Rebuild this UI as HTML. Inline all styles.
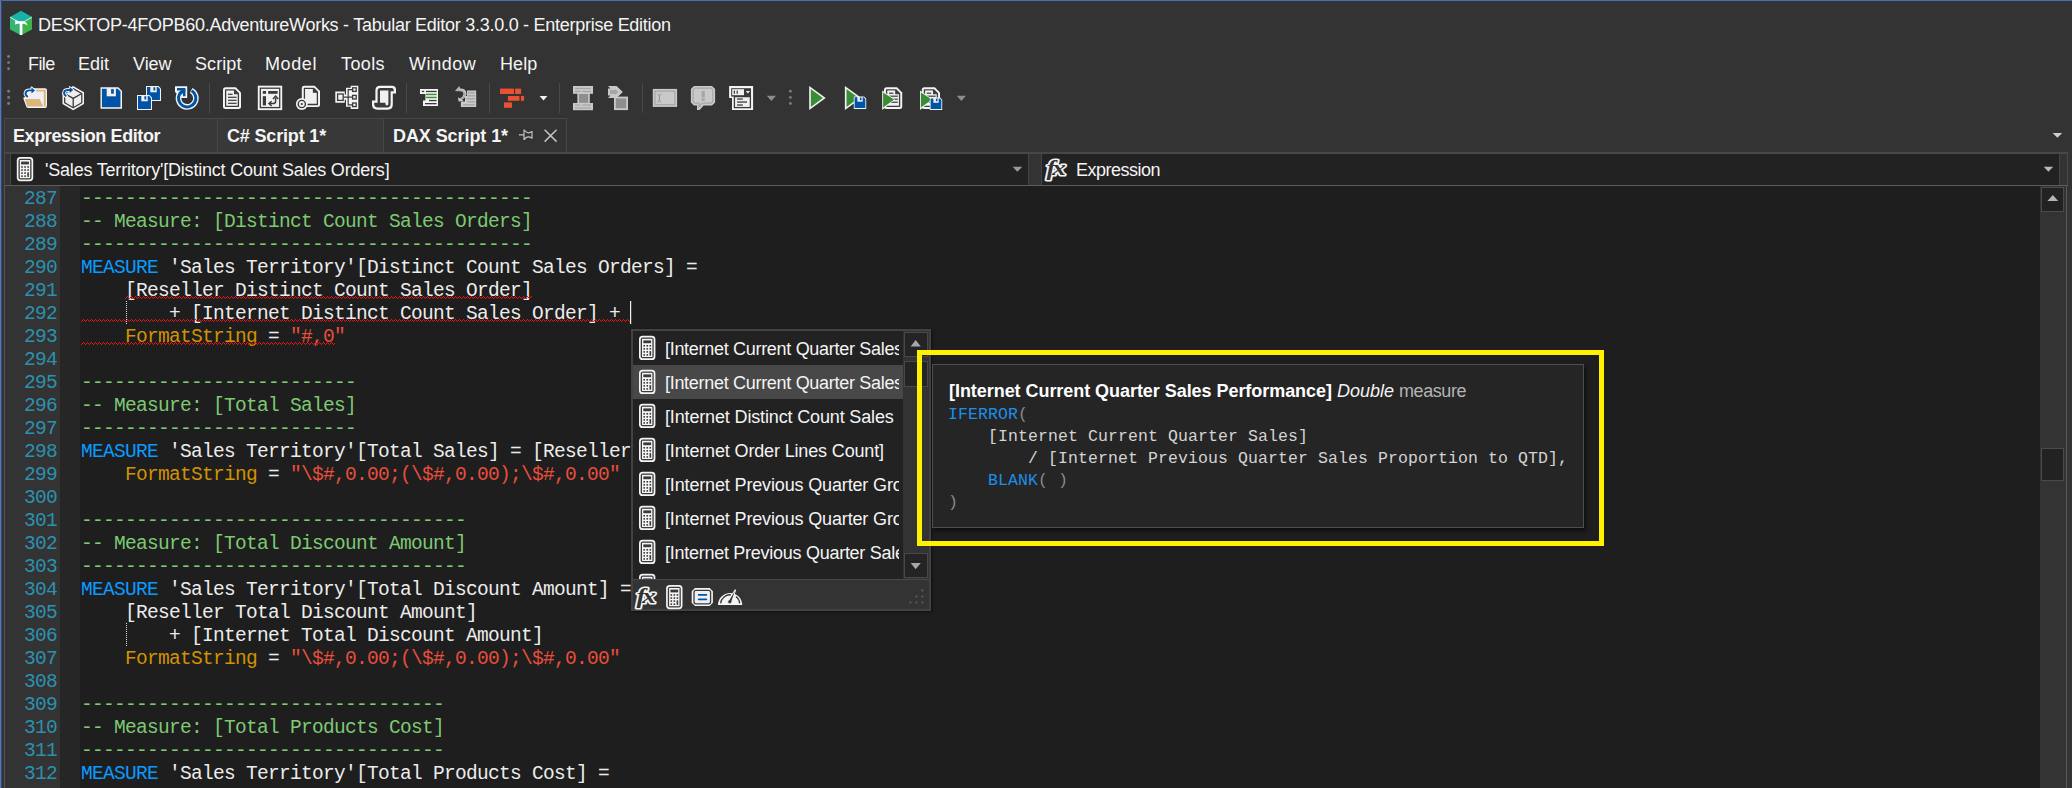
<!DOCTYPE html>
<html><head><meta charset="utf-8"><title>Tabular Editor 3</title>
<style>
html,body{margin:0;padding:0;}
body{width:2072px;height:788px;overflow:hidden;background:#333333;position:relative;font-family:"Liberation Sans",sans-serif;color:#f1f1f1;}
.abs{position:absolute;}
.ui{position:absolute;white-space:nowrap;font-size:18px;line-height:26px;color:#f4f4f4;}
.b{font-weight:700;}
.mono{font-family:"Liberation Mono",monospace;}
.ln{position:absolute;left:6px;width:51px;text-align:right;height:23px;line-height:23px;font-family:"Liberation Mono",monospace;font-size:19.5px;letter-spacing:-0.7px;color:#2b91af;padding-top:2px;box-sizing:border-box;}
.cl{position:absolute;left:81px;height:23px;line-height:23px;white-space:pre;font-family:"Liberation Mono",monospace;font-size:19.5px;letter-spacing:-0.7px;color:#dcdcdc;padding-top:2px;box-sizing:border-box;}
.c{color:#7dca72;} .k{color:#0a9bff;} .t{color:#ececec;} .p{color:#d39200;} .s{color:#e84e3c;}
.row{position:absolute;left:0;width:270px;height:34px;overflow:hidden;white-space:nowrap;}
.row.sel{background:#484848;}
.row .calc{position:absolute;left:5px;top:4px;}
.row .rt{position:absolute;left:32px;top:6px;width:234px;overflow:hidden;font-size:18px;line-height:24px;color:#f4f4f4;letter-spacing:-0.15px;}
.tt{font-family:"Liberation Mono",monospace;font-size:16.5px;letter-spacing:0.1px;line-height:22px;white-space:pre;color:#d4d4d4;position:absolute;left:948px;}
.f{color:#1c8fe8;} .g{color:#8a8a8a;}
</style></head><body>
<!-- window border -->
<div class="abs" style="left:0;top:0;width:2072px;height:1px;background:#4a6db5"></div>
<div class="abs" style="left:0;top:0;width:1px;height:788px;background:#5878bd"></div>
<div class="abs" style="left:1px;top:0;width:1px;height:788px;background:#3a4663"></div>

<!-- title -->
<div class="ui" id="title" style="left:38px;top:12px;letter-spacing:-0.27px">DESKTOP-4FOPB60.AdventureWorks - Tabular Editor 3.3.0.0 - Enterprise Edition</div>

<!-- menu -->
<div class="ui m" style="left:28px;top:51px;letter-spacing:-0.62px">File</div>
<div class="ui m" style="left:78px;top:51px;letter-spacing:0px">Edit</div>
<div class="ui m" style="left:133px;top:51px;letter-spacing:-0.05px">View</div>
<div class="ui m" style="left:195px;top:51px;letter-spacing:0.08px">Script</div>
<div class="ui m" style="left:265px;top:51px;letter-spacing:0.6px">Model</div>
<div class="ui m" style="left:341px;top:51px;letter-spacing:0.4px">Tools</div>
<div class="ui m" style="left:409px;top:51px;letter-spacing:0.57px">Window</div>
<div class="ui m" style="left:500px;top:51px;letter-spacing:0.12px">Help</div>

<svg class="abs" style="left:0;top:44px" width="1000" height="74" viewBox="0 44 1000 74">
<circle cx="8.6" cy="91.3" r="1.45" fill="#7a7a7a"/>
<circle cx="8.6" cy="97.39999999999999" r="1.45" fill="#7a7a7a"/>
<circle cx="8.6" cy="103.5" r="1.45" fill="#7a7a7a"/>
<circle cx="790.4" cy="91.3" r="1.45" fill="#7a7a7a"/>
<circle cx="790.4" cy="97.39999999999999" r="1.45" fill="#7a7a7a"/>
<circle cx="790.4" cy="103.5" r="1.45" fill="#7a7a7a"/>
<circle cx="8.6" cy="56.5" r="1.45" fill="#7a7a7a"/>
<circle cx="8.6" cy="62.6" r="1.45" fill="#7a7a7a"/>
<circle cx="8.6" cy="68.7" r="1.45" fill="#7a7a7a"/>
<rect x="209" y="83" width="1" height="30" fill="#494949"/>
<rect x="406" y="83" width="1" height="30" fill="#494949"/>
<rect x="489" y="83" width="1" height="30" fill="#494949"/>
<rect x="559" y="83" width="1" height="30" fill="#494949"/>
<rect x="642" y="83" width="1" height="30" fill="#494949"/>
<path d="M36 88.2 H45 Q47 88.2 47 90.2 V106 Q47 108 45 108 H28 Q26.6 108 26.2 106.6 L23.4 98.8 Q23 97.4 24.4 97.2 L25.5 97 V90 L34 88.2Z" fill="#f4f4f4"/>
<rect x="27" y="89.8" width="18.6" height="16.6" fill="#eeeef4"/>
<path d="M36 89.8 H45.8 V106.4 H43.8 V91.6 H36Z" fill="#dcb67a"/>
<path d="M24.8 99 H39.6 L43.2 106.4 H27.2Z" fill="#dcb67a"/>
<path d="M27.6 96.6 C24 94 25.4 90.4 29.4 90.4 H31.6" fill="none" stroke="#f4f4f4" stroke-width="3.8" stroke-linecap="round"/>
<path d="M31.4 87.2 L35.4 90.4 L31.4 93.6Z" fill="#f4f4f4" stroke="#f4f4f4" stroke-width="1.6" stroke-linejoin="round"/>
<path d="M27.8 96.9 C24 94.2 25.2 90.4 29.4 90.4 H32" fill="none" stroke="#0054a6" stroke-width="1.9"/>
<path d="M31.5 87.5 L35 90.4 L31.5 93.4Z" fill="#0054a6"/>
<path d="M73.2 86 L84 92.2 V104 L73.2 110.2 L62.5 104 V92.2Z" fill="#f4f4f4"/>
<path d="M73.2 88.6 L81.8 93.5 V102.8 L73.2 107.7 L64.7 102.8 V93.5Z" fill="#eeeef0" stroke="#3a3a3a" stroke-width="1.3" stroke-linejoin="round"/>
<path d="M64.7 93.5 L73.2 98.4 L81.8 93.5 M73.2 98.4 V107.7" fill="none" stroke="#3a3a3a" stroke-width="1.3"/>
<path d="M66 96 C62.6 93.4 64 90 68 90 H70" fill="none" stroke="#f4f4f4" stroke-width="3.8" stroke-linecap="round"/>
<path d="M69.6 86.8 L73.6 90 L69.6 93.2Z" fill="#f4f4f4" stroke="#f4f4f4" stroke-width="1.4" stroke-linejoin="round"/>
<path d="M66.2 96.3 C62.6 93.6 63.8 90 68 90 H70.4" fill="none" stroke="#0054a6" stroke-width="1.9"/>
<path d="M69.7 87.1 L73.2 90 L69.7 93Z" fill="#0054a6"/>
<path d="M100.5 87.3 H118.4 L122.0 90.89999999999999 V108.8 H100.5Z" fill="#f4f4f4"/><path d="M101.9 88.8 H117.8 L120.5 91.5 V107.2 H101.9Z" fill="#0054a6"/><rect x="106.7" y="88.1" width="9.2" height="8.2" fill="#f2f0f0"/><rect x="111.1" y="89.1" width="2.7" height="4.6" fill="#0054a6"/>
<path d="M146 86 H158.48837209302326 L161 88.51162790697674 V101 H146Z" fill="#f4f4f4"/><path d="M146.97674418604652 87.04651162790698 H158.06976744186048 L159.95348837209303 88.93023255813954 V99.88372093023256 H146.97674418604652Z" fill="#0054a6"/><rect x="150.32558139534885" y="86.55813953488372" width="6.4186046511627906" height="5.720930232558139" fill="#f2f0f0"/><rect x="153.3953488372093" y="87.25581395348837" width="1.8837209302325584" height="3.2093023255813953" fill="#0054a6"/>
<path d="M137 95 H149.48837209302326 L152 97.51162790697674 V110 H137Z" fill="#f4f4f4"/><path d="M137.97674418604652 96.04651162790698 H149.06976744186048 L150.95348837209303 97.93023255813954 V108.88372093023256 H137.97674418604652Z" fill="#0054a6"/><rect x="141.32558139534885" y="95.55813953488372" width="6.4186046511627906" height="5.720930232558139" fill="#f2f0f0"/><rect x="144.3953488372093" y="96.25581395348837" width="1.8837209302325584" height="3.2093023255813953" fill="#0054a6"/>
<path d="M191.15 90.45 A8.7 8.7 0 1 1 179.82 93.59" fill="none" stroke="#f4f4f4" stroke-width="5.6"/>
<path d="M175 86.2 H187.2 V98 H181.4 L175 91.9Z" fill="#f4f4f4"/>
<path d="M191.68 90.74 A8.7 8.7 0 1 1 179.67 93.85" fill="none" stroke="#0054a6" stroke-width="3.0"/>
<path d="M177 88 H185.5 V96.2 H183 V90.5 H177Z" fill="#0054a6"/>
<path d="M179.6 94 L184.4 89.2" stroke="#0054a6" stroke-width="3.4" fill="none"/>
<path d="M225.5 87.3 H235.8 L241 92.5 V106.4 Q241 108.9 238.5 108.9 H225.5 Q223 108.9 223 106.4 V89.8 Q223 87.3 225.5 87.3Z" fill="#f4f4f4"/><path d="M225.6 89.89999999999999 H234.9 L238.4 93.4 V106.30000000000001 H225.6Z" fill="#f0f0f2" stroke="#3a3a3a" stroke-width="1.3" stroke-linejoin="round"/><path d="M234.60000000000002 89.89999999999999 V93.7 H238.4" fill="#3a3a3a" stroke="#3a3a3a" stroke-width="1.1"/>
<rect x="228" y="93.7" width="4.599999999999994" height="1.2" fill="#3a3a3a"/>
<rect x="228" y="96.7" width="8.599999999999994" height="1.2" fill="#3a3a3a"/>
<rect x="228" y="99.7" width="8.599999999999994" height="1.2" fill="#3a3a3a"/>
<rect x="228" y="102.7" width="8.599999999999994" height="1.2" fill="#3a3a3a"/>
<rect x="257.8" y="85.7" width="24.4" height="24.4" fill="#f4f4f4"/>
<rect x="260.3" y="88.2" width="19.4" height="19.4" fill="#f0f0f2" stroke="#3a3a3a" stroke-width="1.3"/>
<rect x="262.8" y="91" width="3.2" height="2.8" fill="#3a3a3a"/>
<rect x="268.2" y="91" width="9.4" height="2.8" fill="#3a3a3a"/>
<rect x="262.8" y="96.2" width="3.2" height="9.2" fill="#3a3a3a"/>
<path d="M270 103.6 H273.2 Q275.6 103.6 275.6 101.2 V98" fill="none" stroke="#3a3a3a" stroke-width="1.5"/>
<path d="M273 99 L275.6 96.2 L278.2 99" fill="none" stroke="#3a3a3a" stroke-width="1.5"/>
<path d="M271.6 101.2 L269 103.6 L271.6 106" fill="none" stroke="#3a3a3a" stroke-width="1.5"/>
<path d="M304.3 85.7 H314.6 L320.0 91.10000000000001 V104.6 Q320.0 107.1 317.5 107.1 H304.3 Q301.8 107.1 301.8 104.6 V88.2 Q301.8 85.7 304.3 85.7Z" fill="#f4f4f4"/><path d="M304.40000000000003 88.3 H313.70000000000005 L317.4 92.00000000000001 V104.5 H304.40000000000003Z" fill="#f0f0f2" stroke="#3a3a3a" stroke-width="1.3" stroke-linejoin="round"/><path d="M313.40000000000003 88.3 V92.30000000000001 H317.4" fill="#3a3a3a" stroke="#3a3a3a" stroke-width="1.1"/>
<circle cx="301.8" cy="104" r="5.9" fill="#f4f4f4"/>
<circle cx="301.8" cy="104" r="3.6" fill="#f0f0f2" stroke="#3a3a3a" stroke-width="1.4"/>
<circle cx="301.8" cy="104" r="1.1" fill="#3a3a3a"/>
<path d="M335.3 91.6 H344.8 V94.6 H346 V87.8 H350.7 V85.7 H358.3 V108.9 H350.7 V106.8 H346 V99.8 H344.8 V102.7 H335.3Z" fill="#f4f4f4"/>
<path d="M343.5 97.2 H352 M348.2 97.2 V89.6 H352 M348.2 97.2 V104.8 H352" fill="none" stroke="#3a3a3a" stroke-width="1.2"/>
<rect x="337.6" y="94" width="5.6" height="6.4" fill="#f0f0f2" stroke="#3a3a3a" stroke-width="1.3"/>
<rect x="352.6" y="87.8" width="3.6" height="3.6" fill="#f0f0f2" stroke="#3a3a3a" stroke-width="1.3"/>
<rect x="352.6" y="95.4" width="3.6" height="3.6" fill="#f0f0f2" stroke="#3a3a3a" stroke-width="1.3"/>
<rect x="352.6" y="103" width="3.6" height="3.6" fill="#f0f0f2" stroke="#3a3a3a" stroke-width="1.3"/>
<path d="M380 85.7 H392 Q396 85.7 396 89.7 V93.4 H392.8 V104.5 Q392.8 109.7 387.6 109.7 H377.4 Q372 109.7 372 104.5 V100.6 H375.4 V90.4 Q375.4 85.7 380 85.7Z" fill="#f4f4f4"/>
<path d="M380.4 88 H391.6 Q393.8 88 393.8 90.2 V91.2 H390.6 V104 Q390.6 107.4 387.2 107.4 H377.8 Q374.2 107.4 374.2 104 V102.8 H377.6 V90.8 Q377.6 88 380.4 88Z" fill="#3a3a3a"/>
<path d="M380 90.4 H388.4 V103.8 Q388.4 105.6 386.9 105.6 Q385.4 105.6 385.4 103.8 V102.8 H380Z" fill="#f0f0f2"/>
<path d="M420 89 H438 V106 H423 V100.6 H425.4 V94 H420Z" fill="#f4f4f4"/>
<rect x="421.8" y="90.8" width="2.4" height="1.3" fill="#3a3a3a"/><rect x="426" y="90.8" width="10.6" height="1.3" fill="#3a3a3a"/>
<rect x="426" y="93.7" width="10.6" height="1.5" fill="#3a9138"/><rect x="426" y="96.7" width="10.6" height="1.5" fill="#3a9138"/>
<rect x="429" y="99.9" width="7.6" height="1.3" fill="#3a3a3a"/><rect x="425" y="103" width="11.6" height="1.3" fill="#3a3a3a"/>
<path d="M467 90.5 H476.2 V106.9 H460.9 V101.6 H465 V96 H467Z" fill="#c9c9c9"/>
<rect x="467.6" y="92.1" width="7.199999999999989" height="1.4" fill="#a6a6a6"/>
<rect x="467.6" y="95.1" width="7.199999999999989" height="1.4" fill="#a6a6a6"/>
<rect x="466.4" y="98.1" width="8.400000000000034" height="1.4" fill="#a6a6a6"/>
<rect x="467.4" y="101.1" width="7.400000000000034" height="1.4" fill="#a6a6a6"/>
<rect x="463" y="104.1" width="11.800000000000011" height="1.4" fill="#a6a6a6"/>
<path d="M459.4 86 L455 91 H458.6 Q464 90.4 463.4 94.6 Q462.8 97 460 98.6 L458 97.2 L458.6 101.6 L463.6 101 L462 99.8 Q466.6 97 466.4 93 Q465.6 88.4 459.8 88.6Z" fill="#c9c9c9"/>
<path d="M459 88.2 L457 90.6 H460 Q465 90.6 464.6 94.8 Q464 97.6 461 99.2" fill="none" stroke="#a6a6a6" stroke-width="1.2"/>
<rect x="500" y="88.6" width="14.00" height="5.40" fill="#e85233"/>
<rect x="515.1" y="88.6" width="6.00" height="5.40" fill="#e85233"/>
<rect x="507.9" y="96" width="11.60" height="4.80" fill="#e85233"/>
<rect x="520.9" y="96" width="3.20" height="4.80" fill="#e85233"/>
<rect x="504" y="102.4" width="8.00" height="5.40" fill="#e85233"/>
<path d="M539.6 96 H547.4 L543.5 100.4Z" fill="#f4f4f4"/>
<rect x="573" y="86" width="20" height="7.8" fill="#c9c9c9"/><rect x="573" y="103" width="20" height="7.2" fill="#c9c9c9"/>
<rect x="577.4" y="93" width="12.4" height="11" fill="#c9c9c9"/><rect x="579" y="94" width="9.2" height="8.8" fill="#8e8e8e"/>
<rect x="575" y="87.8" width="16" height="1.3" fill="#a6a6a6"/><rect x="575" y="90.8" width="5.6" height="1.3" fill="#a6a6a6"/><rect x="582.2" y="90.8" width="8.8" height="1.3" fill="#a6a6a6"/>
<rect x="575" y="104.4" width="5.6" height="1.3" fill="#a6a6a6"/><rect x="582.2" y="104.4" width="8.8" height="1.3" fill="#a6a6a6"/><rect x="575" y="107.4" width="16" height="1.3" fill="#a6a6a6"/>
<path d="M608 86 H616.6 L622.8 92 L616.6 98.1 H608 L610.4 95.6 H608 V88.6 H610.4Z" fill="#c9c9c9"/>
<path d="M610 90 H615.6 L614.4 88.4 L618.4 92 L614.4 95.8 L615.6 94 H610Z" fill="#a6a6a6"/>
<rect x="614" y="96.6" width="14" height="13.5" fill="#c9c9c9"/><rect x="615.8" y="98.4" width="10.4" height="9.9" fill="#8e8e8e"/>
<rect x="652.8" y="88.9" width="24.3" height="18" fill="#c9c9c9"/>
<rect x="655" y="91.1" width="19.9" height="13.6" fill="#c9c9c9" stroke="#a6a6a6" stroke-width="1.2"/>
<path d="M657.6 94 L659.4 95.6 L661.2 94 M659.4 95.6 V100.6 M657.6 102.2 L659.4 100.6 L661.2 102.2" fill="none" stroke="#8e8e8e" stroke-width="1"/>
<path d="M694 86 H712 L715.1 89 V102.4 L712 105.4 H703.6 L699.6 110 H697 V105.4 H694 L690.9 102.4 V89Z" fill="#c9c9c9"/>
<path d="M694.8 88.2 H711.2 L712.9 89.9 V101.5 L711.2 103.2 H702.4 L699 107.2 V103.2 H694.8 L693.1 101.5 V89.9Z" fill="#c9c9c9" stroke="#a6a6a6" stroke-width="1.2"/>
<rect x="701.6" y="91" width="3.2" height="6.4" fill="#a6a6a6"/><rect x="701.6" y="98.4" width="3.2" height="2.6" fill="#a6a6a6"/>
<path d="M729.1 86 H753.1 V110 H732 V98.1 H729.1Z" fill="#f4f4f4"/>
<rect x="731.2" y="88.2" width="19.8" height="8.4" fill="#3a3a3a"/>
<rect x="732.2" y="89.2" width="11.8" height="6" fill="#f0f0f2"/>
<rect x="733.8" y="90.6" width="1.2" height="3.2" fill="#3a3a3a"/><rect x="736.6" y="90.6" width="1.2" height="3.2" fill="#3a3a3a"/>
<path d="M745.8 91 H750 L747.9 93.6Z" fill="#f4f4f4"/>
<rect x="734.4" y="96.6" width="16" height="11" fill="#f0f0f2" stroke="#3a3a3a" stroke-width="1.3"/>
<rect x="737" y="98.4" width="5.8" height="1.3" fill="#3a3a3a"/><rect x="737" y="101.4" width="10" height="1.3" fill="#3a3a3a"/><rect x="737" y="104.4" width="5.8" height="1.3" fill="#3a3a3a"/>
<path d="M766.8 95.8 H776 L771.4 100.9Z" fill="#8c8c8c"/>
<path d="M956.8 95.8 H966 L961.4 100.9Z" fill="#8c8c8c"/>
<path d="M809.2 86 L825.7 98.0 L809.2 110Z" fill="#f4f4f4"/><path d="M810.8000000000001 89.1 L823.0 98.0 L810.8000000000001 106.9Z" fill="#388e34"/>
<path d="M844.9 86 L861.4 98.0 L844.9 110Z" fill="#f4f4f4"/><path d="M846.5 89.1 L858.6999999999999 98.0 L846.5 106.9Z" fill="#388e34"/>
<path d="M853.8 96.5 H864.1237209302325 L866.1999999999999 98.57627906976744 V108.9 H853.8Z" fill="#f4f4f4"/><path d="M854.6074418604651 97.36511627906977 H863.7776744186045 L865.3348837209302 98.92232558139536 V107.97720930232559 H854.6074418604651Z" fill="#0054a6"/><rect x="857.3758139534883" y="96.96139534883721" width="5.306046511627907" height="4.729302325581395" fill="#f2f0f0"/><rect x="859.913488372093" y="97.53813953488373" width="1.5572093023255815" height="2.6530232558139537" fill="#0054a6"/>
<path d="M886.5 87.3 H897.0 L902.2 92.5 V106.4 Q902.2 108.9 899.7 108.9 H886.5 Q884 108.9 884 106.4 V89.8 Q884 87.3 886.5 87.3Z" fill="#f4f4f4"/><path d="M886.6 89.89999999999999 H896.1 L899.6 93.4 V106.30000000000001 H886.6Z" fill="#f0f0f2" stroke="#3a3a3a" stroke-width="1.3" stroke-linejoin="round"/><path d="M895.8 89.89999999999999 V93.7 H899.6" fill="#3a3a3a" stroke="#3a3a3a" stroke-width="1.1"/>
<rect x="888.4" y="90.8" width="5.4" height="1.6" fill="#f4f4f4"/>
<rect x="889" y="92.60000000000001" width="4.399999999999977" height="1.2" fill="#3a3a3a"/>
<rect x="889" y="95.60000000000001" width="8.799999999999955" height="1.2" fill="#3a3a3a"/>
<rect x="889" y="98.60000000000001" width="8.799999999999955" height="1.2" fill="#3a3a3a"/>
<rect x="889" y="101.60000000000001" width="8.799999999999955" height="1.2" fill="#3a3a3a"/>
<path d="M882.2 90.6 L895 99.6 L882.2 110Z" fill="#f4f4f4"/>
<path d="M883.1 92.6 L894.2 99.6 L883.1 107.6Z" fill="#388e34"/>
<path d="M924.3 87.3 H934.8 L940.0 92.5 V106.4 Q940.0 108.9 937.5 108.9 H924.3 Q921.8 108.9 921.8 106.4 V89.8 Q921.8 87.3 924.3 87.3Z" fill="#f4f4f4"/><path d="M924.4 89.89999999999999 H933.9 L937.4 93.4 V106.30000000000001 H924.4Z" fill="#f0f0f2" stroke="#3a3a3a" stroke-width="1.3" stroke-linejoin="round"/><path d="M933.5999999999999 89.89999999999999 V93.7 H937.4" fill="#3a3a3a" stroke="#3a3a3a" stroke-width="1.1"/>
<rect x="926.1999999999999" y="90.8" width="5.4" height="1.6" fill="#f4f4f4"/>
<rect x="926.8" y="92.60000000000001" width="4.399999999999977" height="1.2" fill="#3a3a3a"/>
<rect x="926.8" y="95.60000000000001" width="8.799999999999955" height="1.2" fill="#3a3a3a"/>
<rect x="926.8" y="98.60000000000001" width="8.799999999999955" height="1.2" fill="#3a3a3a"/>
<rect x="926.8" y="101.60000000000001" width="8.799999999999955" height="1.2" fill="#3a3a3a"/>
<path d="M920.0 90.6 L932.8 99.6 L920.0 110Z" fill="#f4f4f4"/>
<path d="M920.9 92.6 L932.0 99.6 L920.9 107.6Z" fill="#388e34"/>
<path d="M929.8 97.6 H940.1237209302325 L942.1999999999999 99.67627906976743 V110.0 H929.8Z" fill="#f4f4f4"/><path d="M930.6074418604651 98.46511627906976 H939.7776744186045 L941.3348837209302 100.02232558139535 V109.07720930232558 H930.6074418604651Z" fill="#0054a6"/><rect x="933.3758139534883" y="98.06139534883721" width="5.306046511627907" height="4.729302325581395" fill="#f2f0f0"/><rect x="935.913488372093" y="98.63813953488372" width="1.5572093023255815" height="2.6530232558139537" fill="#0054a6"/>
</svg>

<!-- tabs -->
<div class="abs" style="left:4px;top:118px;width:563px;height:34px;background:#333;border-top:1px solid #474747;box-sizing:border-box"></div>
<div class="abs" style="left:5px;top:119px;width:378px;height:33px;background:#383838"></div>
<div class="abs" style="left:4px;top:118px;width:1px;height:34px;background:#474747"></div>
<div class="abs" style="left:217px;top:118px;width:1px;height:34px;background:#474747"></div>
<div class="abs" style="left:383px;top:118px;width:1px;height:34px;background:#474747"></div>
<div class="abs" style="left:566px;top:118px;width:1px;height:34px;background:#474747"></div>
<div class="ui b" id="tab1" style="left:13px;top:123px;letter-spacing:-0.41px">Expression Editor</div>
<div class="ui b" id="tab2" style="left:227px;top:123px;letter-spacing:-0.17px">C# Script 1*</div>
<div class="ui b" id="tab3" style="left:393px;top:123px;letter-spacing:-0.08px">DAX Script 1*</div>

<!-- combo row -->
<div class="abs" style="left:4px;top:152px;width:2064px;height:34px;border:1px solid #4b4b4b;border-top:2px solid #474747;border-bottom:1px solid #5c5c5c;box-sizing:border-box;background:#333"></div>
<div class="abs" style="left:10px;top:154px;width:1019px;height:31px;background:#222;border-left:1px solid #444;border-right:1px solid #444;box-sizing:border-box"></div>
<div class="abs" style="left:1041px;top:154px;width:1019px;height:31px;background:#222;border-left:1px solid #444;border-right:1px solid #444;box-sizing:border-box"></div>
<div class="ui" id="combo1" style="left:45px;top:157px;letter-spacing:-0.2px">'Sales Territory'[Distinct Count Sales Orders]</div>
<div class="ui" id="combo2" style="left:1076px;top:157px;letter-spacing:-0.5px">Expression</div>

<!-- editor -->
<div class="abs" style="left:4px;top:186px;width:1px;height:602px;background:#555"></div>
<div class="abs" style="left:5px;top:186px;width:55px;height:602px;background:#333"></div>
<div class="abs" style="left:60px;top:186px;width:20px;height:602px;background:#262626"></div>
<div class="abs" style="left:80px;top:186px;width:1960px;height:602px;background:#1e1e1e"></div>
<div class="abs" style="left:2040px;top:186px;width:26px;height:602px;background:#333"></div>
<div class="abs" style="left:2066px;top:186px;width:1px;height:602px;background:#5a5a5a"></div>
<!-- scrollbar -->
<div class="abs" style="left:2041px;top:187px;width:23px;height:25px;background:#222;border:1px solid #4a4a4a;box-sizing:border-box"></div>
<div class="abs" style="left:2041px;top:448px;width:23px;height:33px;background:#222;border:1px solid #4a4a4a;box-sizing:border-box"></div>

<div class="ln" style="top:186px">287</div><div class="ln" style="top:209px">288</div><div class="ln" style="top:232px">289</div><div class="ln" style="top:255px">290</div><div class="ln" style="top:278px">291</div><div class="ln" style="top:301px">292</div><div class="ln" style="top:324px">293</div><div class="ln" style="top:347px">294</div><div class="ln" style="top:370px">295</div><div class="ln" style="top:393px">296</div><div class="ln" style="top:416px">297</div><div class="ln" style="top:439px">298</div><div class="ln" style="top:462px">299</div><div class="ln" style="top:485px">300</div><div class="ln" style="top:508px">301</div><div class="ln" style="top:531px">302</div><div class="ln" style="top:554px">303</div><div class="ln" style="top:577px">304</div><div class="ln" style="top:600px">305</div><div class="ln" style="top:623px">306</div><div class="ln" style="top:646px">307</div><div class="ln" style="top:669px">308</div><div class="ln" style="top:692px">309</div><div class="ln" style="top:715px">310</div><div class="ln" style="top:738px">311</div><div class="ln" style="top:761px">312</div>
<div class="cl" style="top:186px"><span class="c">-----------------------------------------</span></div><div class="cl" style="top:209px"><span class="c">-- Measure: [Distinct Count Sales Orders]</span></div><div class="cl" style="top:232px"><span class="c">-----------------------------------------</span></div><div class="cl" style="top:255px"><span class="k">MEASURE</span><span class="t"> 'Sales Territory'[Distinct Count Sales Orders] =</span></div><div class="cl" style="top:278px"><span class="t">    [Reseller Distinct Count Sales Order]</span></div><div class="cl" style="top:301px"><span class="t">        + [Internet Distinct Count Sales Order] + </span></div><div class="cl" style="top:324px"><span class="t">    </span><span class="p">FormatString</span><span class="t"> = </span><span class="s">"#,0"</span></div><div class="cl" style="top:347px"></div><div class="cl" style="top:370px"><span class="c">-------------------------</span></div><div class="cl" style="top:393px"><span class="c">-- Measure: [Total Sales]</span></div><div class="cl" style="top:416px"><span class="c">-------------------------</span></div><div class="cl" style="top:439px"><span class="k">MEASURE</span><span class="t"> 'Sales Territory'[Total Sales] = [Reseller</span></div><div class="cl" style="top:462px"><span class="t">    </span><span class="p">FormatString</span><span class="t"> = </span><span class="s">"\$#,0.00;(\$#,0.00);\$#,0.00"</span></div><div class="cl" style="top:485px"></div><div class="cl" style="top:508px"><span class="c">-----------------------------------</span></div><div class="cl" style="top:531px"><span class="c">-- Measure: [Total Discount Amount]</span></div><div class="cl" style="top:554px"><span class="c">-----------------------------------</span></div><div class="cl" style="top:577px"><span class="k">MEASURE</span><span class="t"> 'Sales Territory'[Total Discount Amount] =</span></div><div class="cl" style="top:600px"><span class="t">    [Reseller Total Discount Amount]</span></div><div class="cl" style="top:623px"><span class="t">        + [Internet Total Discount Amount]</span></div><div class="cl" style="top:646px"><span class="t">    </span><span class="p">FormatString</span><span class="t"> = </span><span class="s">"\$#,0.00;(\$#,0.00);\$#,0.00"</span></div><div class="cl" style="top:669px"></div><div class="cl" style="top:692px"><span class="c">---------------------------------</span></div><div class="cl" style="top:715px"><span class="c">-- Measure: [Total Products Cost]</span></div><div class="cl" style="top:738px"><span class="c">---------------------------------</span></div><div class="cl" style="top:761px"><span class="k">MEASURE</span><span class="t"> 'Sales Territory'[Total Products Cost] =</span></div>
<svg class="abs" style="left:0;top:186px" width="700" height="602" viewBox="0 186 700 602"><pattern id="sq1" x="125" y="296" width="4" height="3" patternUnits="userSpaceOnUse"><path d="M0 2h1v1h-1zM1 1h1v1h-1zM2 0h1v1h-1zM3 1h1v1h-1z" fill="#e81515" shape-rendering="crispEdges"/></pattern><rect x="125" y="296" width="407" height="3" fill="url(#sq1)" shape-rendering="crispEdges"/><pattern id="sq2" x="81" y="319" width="4" height="3" patternUnits="userSpaceOnUse"><path d="M0 2h1v1h-1zM1 1h1v1h-1zM2 0h1v1h-1zM3 1h1v1h-1z" fill="#e81515" shape-rendering="crispEdges"/></pattern><rect x="81" y="319" width="549" height="3" fill="url(#sq2)" shape-rendering="crispEdges"/><pattern id="sq3" x="81" y="342" width="4" height="3" patternUnits="userSpaceOnUse"><path d="M0 2h1v1h-1zM1 1h1v1h-1zM2 0h1v1h-1zM3 1h1v1h-1z" fill="#e81515" shape-rendering="crispEdges"/></pattern><rect x="81" y="342" width="254" height="3" fill="url(#sq3)" shape-rendering="crispEdges"/>
<line x1="126.5" y1="301" x2="126.5" y2="324" stroke="#e0e0e0" stroke-width="1" stroke-dasharray="1 1"/>
<line x1="126.5" y1="623" x2="126.5" y2="646" stroke="#e0e0e0" stroke-width="1" stroke-dasharray="1 1"/>
<rect x="630" y="301" width="1.2" height="23" fill="#f0f0f0"/>
</svg>

<!-- autocomplete popup -->
<div class="abs" id="popup" style="left:631px;top:329px;width:300px;height:282px;background:#222;border:2px solid #424242;box-sizing:border-box;box-shadow:1px 1px 3px rgba(0,0,0,0.5)">
  <div class="abs" style="left:0;top:0;width:270px;height:248px;overflow:hidden"><div class="row" style="top:0px"><span class="rt" style="letter-spacing:-0.3px">[Internet Current Quarter Sales]</span></div><div class="row sel" style="top:34px"><span class="rt" style="letter-spacing:-0.3px">[Internet Current Quarter Sales Performance]</span></div><div class="row" style="top:68px"><span class="rt">[Internet Distinct Count Sales Order]</span></div><div class="row" style="top:102px"><span class="rt">[Internet Order Lines Count]</span></div><div class="row" style="top:136px"><span class="rt">[Internet Previous Quarter Gross Profit]</span></div><div class="row" style="top:170px"><span class="rt">[Internet Previous Quarter Gross Profit Proportion to QTD]</span></div><div class="row" style="top:204px"><span class="rt" style="letter-spacing:-0.27px">[Internet Previous Quarter Sales]</span></div><div class="row" style="top:238px"><span class="rt" style="letter-spacing:-0.27px">[Internet Previous Quarter Sales Proportion to QTD]</span></div></div>
  <div class="abs" style="left:270px;top:0;width:26px;height:248px;background:#333"></div>
  <div class="abs" style="left:271px;top:1px;width:24px;height:25px;background:#242424;border:1px solid #484848;box-sizing:border-box"></div>
  <div class="abs" style="left:271px;top:30px;width:24px;height:26px;background:#242424;border:1px solid #484848;box-sizing:border-box"></div>
  <div class="abs" style="left:271px;top:222px;width:24px;height:25px;background:#242424;border:1px solid #484848;box-sizing:border-box"></div>
  <div class="abs" style="left:0;top:248px;width:296px;height:30px;background:#333;border-top:1px solid #484848;box-sizing:border-box"></div>
</div>

<!-- tooltip -->
<div class="abs" id="tip" style="left:932px;top:364px;width:652px;height:164px;background:#252526;border:1px solid #4e4e4e;box-sizing:border-box;box-shadow:2px 3px 4px rgba(0,0,0,0.55)"></div>
<div class="ui" id="tiphead" style="left:949px;top:378px"><span class="b" style="letter-spacing:-0.05px;color:#fff">[Internet Current Quarter Sales Performance]</span> <i>Double</i> <span style="color:#b4b4b4;letter-spacing:-0.43px">measure</span></div>
<div class="tt" style="top:404px"><span class="f">IFERROR</span><span class="g">(</span></div>
<div class="tt" style="top:426px">    [Internet Current Quarter Sales]</div>
<div class="tt" style="top:448px">        / [Internet Previous Quarter Sales Proportion to QTD],</div>
<div class="tt" style="top:470px">    <span class="f">BLANK</span><span class="g">( )</span></div>
<div class="tt" style="top:492px"><span class="g">)</span></div>

<!-- yellow highlight -->
<div class="abs" style="left:917px;top:350px;width:687px;height:196px;border:5px solid #fff200;box-sizing:border-box"></div>

<svg class="abs" style="left:0;top:0;pointer-events:none" width="2072" height="788" viewBox="0 0 2072 788">
<path d="M21 10.8 L32 17.1 L21 23.4 L10 17.1Z" fill="#16b3a6"/>
<path d="M10 17.1 L21 23.4 V35.2 L10 29.4Z" fill="#35b56f"/>
<path d="M32 17.1 L21 23.4 V35.2 L32 29.4Z" fill="#3db54c"/>
<path d="M10 17.1 L21 23.4 L32 17.1" fill="none" stroke="#e8f8f0" stroke-width="0.9"/>
<path d="M19.7 21.6 H22.4 V35 H19.7Z" fill="#fff"/>
<path d="M15.2 20.4 L16.6 20.2 Q17.6 21.4 19.4 21.2 H24.2 Q26.6 22 27.8 25.6 Q25.2 23.6 22.6 23.8 H17.4 Q16.4 23.8 16 24.6 L15.2 24.4Z" fill="#fff"/>
<path d="M518.9 134.9 H523.6 M524 129.4 V140 M524.4 130 Q527.4 134.6 532 131.6 M524.4 139.4 Q527.4 135 532 138.2 M532 131 V138.8" fill="none" stroke="#c2c2c2" stroke-width="1.2"/>
<path d="M544.6 129.8 L556.6 141.6 M556.6 129.8 L544.6 141.6" fill="none" stroke="#c2c2c2" stroke-width="1.5"/>
<path d="M2052.6 133 H2062.2 L2057.4 137.8Z" fill="#cfcfcf"/>
<path d="M1012.6 166.8 H1022.2 L1017.4 171.7Z" fill="#9a9a9a"/>
<path d="M2043.7 166.8 H2053.2 L2048.4 171.7Z" fill="#b8b8b8"/>
<path d="M2047.4 201 H2058.2 L2052.8 195Z" fill="#b4b4b4"/>
<path d="M910.6 346.4 H920.8 L915.7 340Z" fill="#a8a8a8"/>
<path d="M910.6 563 H920.8 L915.7 569.3Z" fill="#a8a8a8"/>
<circle cx="922.4" cy="590.4" r="1.3" fill="#505050"/>
<circle cx="916.4" cy="596.5" r="1.3" fill="#505050"/>
<circle cx="922.4" cy="596.5" r="1.3" fill="#505050"/>
<circle cx="910.4" cy="602.5" r="1.3" fill="#505050"/>
<circle cx="916.4" cy="602.5" r="1.3" fill="#505050"/>
<circle cx="922.4" cy="602.5" r="1.3" fill="#505050"/>
<text transform="translate(1046.5,174.5) scale(1.32,1)" x="0" y="0" font-family="Liberation Serif, serif" font-style="italic" font-weight="700" font-size="20.5" letter-spacing="-2.4" stroke="#f4f4f4" stroke-width="2.9" stroke-linejoin="round" paint-order="stroke" fill="#333">fx</text>
<text transform="translate(636.5,602.5) scale(1.32,1)" x="0" y="0" font-family="Liberation Serif, serif" font-style="italic" font-weight="700" font-size="20.5" letter-spacing="-2.4" stroke="#f4f4f4" stroke-width="2.9" stroke-linejoin="round" paint-order="stroke" fill="#333">fx</text>
<rect x="16.8" y="157" width="16.4" height="24.2" rx="3.6" fill="#f4f4f4"/>
<rect x="18.5" y="158.7" width="13" height="20.8" rx="2" fill="#3a3a3a"/>
<rect x="19.8" y="160" width="10.4" height="18.2" fill="#f4f4f4"/>
<rect x="21.1" y="161.6" width="7.8" height="2.8" fill="#3a3a3a"/>
<rect x="21.200000000000003" y="166.2" width="1.6" height="1.6" fill="#3a3a3a"/>
<rect x="24.250000000000004" y="166.2" width="1.6" height="1.6" fill="#3a3a3a"/>
<rect x="27.300000000000004" y="166.2" width="1.6" height="1.6" fill="#3a3a3a"/>
<rect x="21.200000000000003" y="169.25" width="1.6" height="1.6" fill="#3a3a3a"/>
<rect x="24.250000000000004" y="169.25" width="1.6" height="1.6" fill="#3a3a3a"/>
<rect x="27.300000000000004" y="169.25" width="1.6" height="1.6" fill="#3a3a3a"/>
<rect x="21.200000000000003" y="172.29999999999998" width="1.6" height="1.6" fill="#3a3a3a"/>
<rect x="24.250000000000004" y="172.29999999999998" width="1.6" height="1.6" fill="#3a3a3a"/>
<rect x="27.300000000000004" y="172.29999999999998" width="1.6" height="4.6" fill="#3a3a3a"/>
<rect x="21.200000000000003" y="175.35" width="1.6" height="1.6" fill="#3a3a3a"/>
<rect x="24.250000000000004" y="175.35" width="1.6" height="1.6" fill="#3a3a3a"/>
<rect x="666.1" y="585" width="16.4" height="24.2" rx="3.6" fill="#f4f4f4"/>
<rect x="667.8000000000001" y="586.7" width="13" height="20.8" rx="2" fill="#3a3a3a"/>
<rect x="669.1" y="588" width="10.4" height="18.2" fill="#f4f4f4"/>
<rect x="670.4" y="589.6" width="7.8" height="2.8" fill="#3a3a3a"/>
<rect x="670.5" y="594.2" width="1.6" height="1.6" fill="#3a3a3a"/>
<rect x="673.55" y="594.2" width="1.6" height="1.6" fill="#3a3a3a"/>
<rect x="676.6" y="594.2" width="1.6" height="1.6" fill="#3a3a3a"/>
<rect x="670.5" y="597.25" width="1.6" height="1.6" fill="#3a3a3a"/>
<rect x="673.55" y="597.25" width="1.6" height="1.6" fill="#3a3a3a"/>
<rect x="676.6" y="597.25" width="1.6" height="1.6" fill="#3a3a3a"/>
<rect x="670.5" y="600.3000000000001" width="1.6" height="1.6" fill="#3a3a3a"/>
<rect x="673.55" y="600.3000000000001" width="1.6" height="1.6" fill="#3a3a3a"/>
<rect x="676.6" y="600.3000000000001" width="1.6" height="4.6" fill="#3a3a3a"/>
<rect x="670.5" y="603.35" width="1.6" height="1.6" fill="#3a3a3a"/>
<rect x="673.55" y="603.35" width="1.6" height="1.6" fill="#3a3a3a"/>
<rect x="639" y="335.8" width="16.4" height="24.2" rx="3.6" fill="#f4f4f4"/>
<rect x="640.7" y="337.5" width="13" height="20.8" rx="2" fill="#3a3a3a"/>
<rect x="642" y="338.8" width="10.4" height="18.2" fill="#f4f4f4"/>
<rect x="643.3" y="340.40000000000003" width="7.8" height="2.8" fill="#3a3a3a"/>
<rect x="643.4" y="345.0" width="1.6" height="1.6" fill="#3a3a3a"/>
<rect x="646.4499999999999" y="345.0" width="1.6" height="1.6" fill="#3a3a3a"/>
<rect x="649.5" y="345.0" width="1.6" height="1.6" fill="#3a3a3a"/>
<rect x="643.4" y="348.05" width="1.6" height="1.6" fill="#3a3a3a"/>
<rect x="646.4499999999999" y="348.05" width="1.6" height="1.6" fill="#3a3a3a"/>
<rect x="649.5" y="348.05" width="1.6" height="1.6" fill="#3a3a3a"/>
<rect x="643.4" y="351.1" width="1.6" height="1.6" fill="#3a3a3a"/>
<rect x="646.4499999999999" y="351.1" width="1.6" height="1.6" fill="#3a3a3a"/>
<rect x="649.5" y="351.1" width="1.6" height="4.6" fill="#3a3a3a"/>
<rect x="643.4" y="354.15" width="1.6" height="1.6" fill="#3a3a3a"/>
<rect x="646.4499999999999" y="354.15" width="1.6" height="1.6" fill="#3a3a3a"/>
<rect x="639" y="369.8" width="16.4" height="24.2" rx="3.6" fill="#f4f4f4"/>
<rect x="640.7" y="371.5" width="13" height="20.8" rx="2" fill="#3a3a3a"/>
<rect x="642" y="372.8" width="10.4" height="18.2" fill="#f4f4f4"/>
<rect x="643.3" y="374.40000000000003" width="7.8" height="2.8" fill="#3a3a3a"/>
<rect x="643.4" y="379.0" width="1.6" height="1.6" fill="#3a3a3a"/>
<rect x="646.4499999999999" y="379.0" width="1.6" height="1.6" fill="#3a3a3a"/>
<rect x="649.5" y="379.0" width="1.6" height="1.6" fill="#3a3a3a"/>
<rect x="643.4" y="382.05" width="1.6" height="1.6" fill="#3a3a3a"/>
<rect x="646.4499999999999" y="382.05" width="1.6" height="1.6" fill="#3a3a3a"/>
<rect x="649.5" y="382.05" width="1.6" height="1.6" fill="#3a3a3a"/>
<rect x="643.4" y="385.1" width="1.6" height="1.6" fill="#3a3a3a"/>
<rect x="646.4499999999999" y="385.1" width="1.6" height="1.6" fill="#3a3a3a"/>
<rect x="649.5" y="385.1" width="1.6" height="4.6" fill="#3a3a3a"/>
<rect x="643.4" y="388.15" width="1.6" height="1.6" fill="#3a3a3a"/>
<rect x="646.4499999999999" y="388.15" width="1.6" height="1.6" fill="#3a3a3a"/>
<rect x="639" y="403.8" width="16.4" height="24.2" rx="3.6" fill="#f4f4f4"/>
<rect x="640.7" y="405.5" width="13" height="20.8" rx="2" fill="#3a3a3a"/>
<rect x="642" y="406.8" width="10.4" height="18.2" fill="#f4f4f4"/>
<rect x="643.3" y="408.40000000000003" width="7.8" height="2.8" fill="#3a3a3a"/>
<rect x="643.4" y="413.0" width="1.6" height="1.6" fill="#3a3a3a"/>
<rect x="646.4499999999999" y="413.0" width="1.6" height="1.6" fill="#3a3a3a"/>
<rect x="649.5" y="413.0" width="1.6" height="1.6" fill="#3a3a3a"/>
<rect x="643.4" y="416.05" width="1.6" height="1.6" fill="#3a3a3a"/>
<rect x="646.4499999999999" y="416.05" width="1.6" height="1.6" fill="#3a3a3a"/>
<rect x="649.5" y="416.05" width="1.6" height="1.6" fill="#3a3a3a"/>
<rect x="643.4" y="419.1" width="1.6" height="1.6" fill="#3a3a3a"/>
<rect x="646.4499999999999" y="419.1" width="1.6" height="1.6" fill="#3a3a3a"/>
<rect x="649.5" y="419.1" width="1.6" height="4.6" fill="#3a3a3a"/>
<rect x="643.4" y="422.15" width="1.6" height="1.6" fill="#3a3a3a"/>
<rect x="646.4499999999999" y="422.15" width="1.6" height="1.6" fill="#3a3a3a"/>
<rect x="639" y="437.8" width="16.4" height="24.2" rx="3.6" fill="#f4f4f4"/>
<rect x="640.7" y="439.5" width="13" height="20.8" rx="2" fill="#3a3a3a"/>
<rect x="642" y="440.8" width="10.4" height="18.2" fill="#f4f4f4"/>
<rect x="643.3" y="442.40000000000003" width="7.8" height="2.8" fill="#3a3a3a"/>
<rect x="643.4" y="447.0" width="1.6" height="1.6" fill="#3a3a3a"/>
<rect x="646.4499999999999" y="447.0" width="1.6" height="1.6" fill="#3a3a3a"/>
<rect x="649.5" y="447.0" width="1.6" height="1.6" fill="#3a3a3a"/>
<rect x="643.4" y="450.05" width="1.6" height="1.6" fill="#3a3a3a"/>
<rect x="646.4499999999999" y="450.05" width="1.6" height="1.6" fill="#3a3a3a"/>
<rect x="649.5" y="450.05" width="1.6" height="1.6" fill="#3a3a3a"/>
<rect x="643.4" y="453.1" width="1.6" height="1.6" fill="#3a3a3a"/>
<rect x="646.4499999999999" y="453.1" width="1.6" height="1.6" fill="#3a3a3a"/>
<rect x="649.5" y="453.1" width="1.6" height="4.6" fill="#3a3a3a"/>
<rect x="643.4" y="456.15" width="1.6" height="1.6" fill="#3a3a3a"/>
<rect x="646.4499999999999" y="456.15" width="1.6" height="1.6" fill="#3a3a3a"/>
<rect x="639" y="471.8" width="16.4" height="24.2" rx="3.6" fill="#f4f4f4"/>
<rect x="640.7" y="473.5" width="13" height="20.8" rx="2" fill="#3a3a3a"/>
<rect x="642" y="474.8" width="10.4" height="18.2" fill="#f4f4f4"/>
<rect x="643.3" y="476.40000000000003" width="7.8" height="2.8" fill="#3a3a3a"/>
<rect x="643.4" y="481.0" width="1.6" height="1.6" fill="#3a3a3a"/>
<rect x="646.4499999999999" y="481.0" width="1.6" height="1.6" fill="#3a3a3a"/>
<rect x="649.5" y="481.0" width="1.6" height="1.6" fill="#3a3a3a"/>
<rect x="643.4" y="484.05" width="1.6" height="1.6" fill="#3a3a3a"/>
<rect x="646.4499999999999" y="484.05" width="1.6" height="1.6" fill="#3a3a3a"/>
<rect x="649.5" y="484.05" width="1.6" height="1.6" fill="#3a3a3a"/>
<rect x="643.4" y="487.1" width="1.6" height="1.6" fill="#3a3a3a"/>
<rect x="646.4499999999999" y="487.1" width="1.6" height="1.6" fill="#3a3a3a"/>
<rect x="649.5" y="487.1" width="1.6" height="4.6" fill="#3a3a3a"/>
<rect x="643.4" y="490.15" width="1.6" height="1.6" fill="#3a3a3a"/>
<rect x="646.4499999999999" y="490.15" width="1.6" height="1.6" fill="#3a3a3a"/>
<rect x="639" y="505.8" width="16.4" height="24.2" rx="3.6" fill="#f4f4f4"/>
<rect x="640.7" y="507.5" width="13" height="20.8" rx="2" fill="#3a3a3a"/>
<rect x="642" y="508.8" width="10.4" height="18.2" fill="#f4f4f4"/>
<rect x="643.3" y="510.40000000000003" width="7.8" height="2.8" fill="#3a3a3a"/>
<rect x="643.4" y="515.0" width="1.6" height="1.6" fill="#3a3a3a"/>
<rect x="646.4499999999999" y="515.0" width="1.6" height="1.6" fill="#3a3a3a"/>
<rect x="649.5" y="515.0" width="1.6" height="1.6" fill="#3a3a3a"/>
<rect x="643.4" y="518.05" width="1.6" height="1.6" fill="#3a3a3a"/>
<rect x="646.4499999999999" y="518.05" width="1.6" height="1.6" fill="#3a3a3a"/>
<rect x="649.5" y="518.05" width="1.6" height="1.6" fill="#3a3a3a"/>
<rect x="643.4" y="521.1" width="1.6" height="1.6" fill="#3a3a3a"/>
<rect x="646.4499999999999" y="521.1" width="1.6" height="1.6" fill="#3a3a3a"/>
<rect x="649.5" y="521.1" width="1.6" height="4.6" fill="#3a3a3a"/>
<rect x="643.4" y="524.15" width="1.6" height="1.6" fill="#3a3a3a"/>
<rect x="646.4499999999999" y="524.15" width="1.6" height="1.6" fill="#3a3a3a"/>
<rect x="639" y="539.8" width="16.4" height="24.2" rx="3.6" fill="#f4f4f4"/>
<rect x="640.7" y="541.5" width="13" height="20.8" rx="2" fill="#3a3a3a"/>
<rect x="642" y="542.8" width="10.4" height="18.2" fill="#f4f4f4"/>
<rect x="643.3" y="544.4" width="7.8" height="2.8" fill="#3a3a3a"/>
<rect x="643.4" y="549.0" width="1.6" height="1.6" fill="#3a3a3a"/>
<rect x="646.4499999999999" y="549.0" width="1.6" height="1.6" fill="#3a3a3a"/>
<rect x="649.5" y="549.0" width="1.6" height="1.6" fill="#3a3a3a"/>
<rect x="643.4" y="552.05" width="1.6" height="1.6" fill="#3a3a3a"/>
<rect x="646.4499999999999" y="552.05" width="1.6" height="1.6" fill="#3a3a3a"/>
<rect x="649.5" y="552.05" width="1.6" height="1.6" fill="#3a3a3a"/>
<rect x="643.4" y="555.1" width="1.6" height="1.6" fill="#3a3a3a"/>
<rect x="646.4499999999999" y="555.1" width="1.6" height="1.6" fill="#3a3a3a"/>
<rect x="649.5" y="555.1" width="1.6" height="4.6" fill="#3a3a3a"/>
<rect x="643.4" y="558.15" width="1.6" height="1.6" fill="#3a3a3a"/>
<rect x="646.4499999999999" y="558.15" width="1.6" height="1.6" fill="#3a3a3a"/>
<clipPath id="cp7"><rect x="633" y="331" width="270" height="248"/></clipPath><g clip-path="url(#cp7)">
<rect x="639" y="573.8" width="16.4" height="24.2" rx="3.6" fill="#f4f4f4"/>
<rect x="640.7" y="575.5" width="13" height="20.8" rx="2" fill="#3a3a3a"/>
<rect x="642" y="576.8" width="10.4" height="18.2" fill="#f4f4f4"/>
<rect x="643.3" y="578.4" width="7.8" height="2.8" fill="#3a3a3a"/>
<rect x="643.4" y="583.0" width="1.6" height="1.6" fill="#3a3a3a"/>
<rect x="646.4499999999999" y="583.0" width="1.6" height="1.6" fill="#3a3a3a"/>
<rect x="649.5" y="583.0" width="1.6" height="1.6" fill="#3a3a3a"/>
<rect x="643.4" y="586.05" width="1.6" height="1.6" fill="#3a3a3a"/>
<rect x="646.4499999999999" y="586.05" width="1.6" height="1.6" fill="#3a3a3a"/>
<rect x="649.5" y="586.05" width="1.6" height="1.6" fill="#3a3a3a"/>
<rect x="643.4" y="589.1" width="1.6" height="1.6" fill="#3a3a3a"/>
<rect x="646.4499999999999" y="589.1" width="1.6" height="1.6" fill="#3a3a3a"/>
<rect x="649.5" y="589.1" width="1.6" height="4.6" fill="#3a3a3a"/>
<rect x="643.4" y="592.15" width="1.6" height="1.6" fill="#3a3a3a"/>
<rect x="646.4499999999999" y="592.15" width="1.6" height="1.6" fill="#3a3a3a"/>
</g>
<path d="M695 588 H709.6 L712.9 591.2 V602.8 L709.6 606.1 H695 L691.7 602.8 V591.2Z" fill="#f4f4f4"/>
<rect x="694" y="590.3" width="16.6" height="13.5" rx="2" fill="#f0f0f2" stroke="#3a3a3a" stroke-width="1.3"/>
<rect x="697.8" y="594" width="9.4" height="1.7" rx="0.8" fill="#0054a6"/><rect x="697.8" y="598.5" width="9.4" height="1.7" rx="0.8" fill="#0054a6"/>
<path d="M718 605 A12.1 12.1 0 0 1 742.2 605Z" fill="#f4f4f4"/>
<path d="M720.6 603.4 A9.6 9.6 0 0 1 731 594.8 M736 596.6 A9.6 9.6 0 0 1 739.7 603.4" fill="none" stroke="#3a3a3a" stroke-width="1.3"/>
<path d="M735.2 590.2 L728.4 601.4 L731.4 602.6Z" fill="#3a3a3a" stroke="#f4f4f4" stroke-width="1.6" stroke-linejoin="round"/>
<circle cx="729.8" cy="601.8" r="2.1" fill="#3a3a3a" stroke="#f4f4f4" stroke-width="0.9"/>
<path d="M735 590.8 L728.8 601.2 L731 602.2Z" fill="#3a3a3a"/>
</svg>
</body></html>
